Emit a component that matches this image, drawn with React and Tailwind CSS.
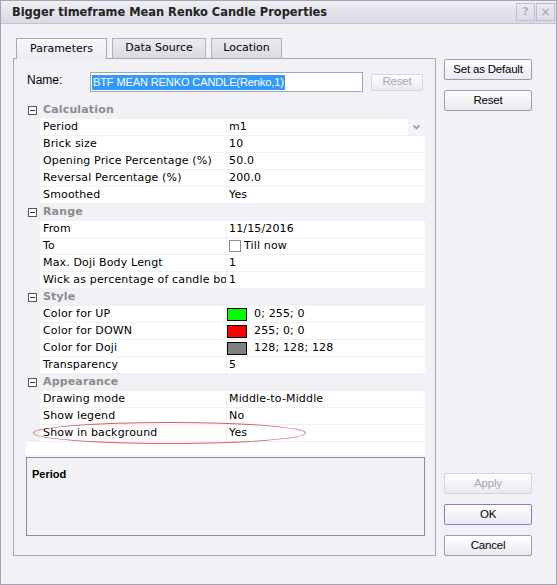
import React from "react";

const sections = [
  {
    title: "Calculation",
    rows: [
      { name: "Period", value: "m1", dropdown: true },
      { name: "Brick size", value: "10" },
      { name: "Opening Price Percentage (%)", value: "50.0" },
      { name: "Reversal Percentage (%)", value: "200.0" },
      { name: "Smoothed", value: "Yes" },
    ],
  },
  {
    title: "Range",
    rows: [
      { name: "From", value: "11/15/2016" },
      { name: "To", value: "Till now", checkbox: true },
      { name: "Max. Doji Body Lengt", value: "1" },
      { name: "Wick as percentage of candle body", value: "1" },
    ],
  },
  {
    title: "Style",
    rows: [
      { name: "Color for UP", value: "0; 255; 0", swatch: "bg-[#00ff00]" },
      { name: "Color for DOWN", value: "255; 0; 0", swatch: "bg-[#ff0000]" },
      { name: "Color for Doji", value: "128; 128; 128", swatch: "bg-[#808080]" },
      { name: "Transparency", value: "5" },
    ],
  },
  {
    title: "Appearance",
    rows: [
      { name: "Drawing mode", value: "Middle-to-Middle" },
      { name: "Show legend", value: "No" },
      { name: "Show in background", value: "Yes", circled: true },
    ],
  },
];

const ui = { fontFamily: '"Liberation Sans", Arial, sans-serif' };
const grid = { fontFamily: '"DejaVu Sans", Verdana, sans-serif' };
const title = { fontFamily: '"DejaVu Sans Condensed", "DejaVu Sans", sans-serif' };

function Button({ children, disabled, primary, className = "" }) {
  const border = disabled
    ? "border-[#d4d4dc] text-[#a8a8b0]"
    : primary
    ? "border-[#8080c8] text-black"
    : "border-[#9c9cac] text-black";
  return (
    <div
      className={`flex items-center justify-center rounded-[2px] border bg-gradient-to-b from-white to-[#e9e9f0] text-[11.5px] tracking-[-0.2px] ${border} ${className}`}
      style={ui}
    >
      {children}
    </div>
  );
}

function PropRow({ row }) {
  return (
    <div className="relative flex h-[17px] border-b border-[#f0f0f5] text-[11px] tracking-[0.15px] text-black">
      <div className="w-[14px] shrink-0" />
      <div className="flex w-[186px] shrink-0 items-center overflow-hidden whitespace-nowrap bg-white pl-[3px]">
        {row.name}
      </div>
      <div className="w-px shrink-0 bg-[#f0f0f5]" />
      <div className="flex flex-1 items-center bg-white pl-[2px]">
        {row.swatch ? (
          <span className={`-ml-[2px] mr-[7px] h-[13px] w-[20px] border border-black ${row.swatch}`} />
        ) : null}
        {row.checkbox ? (
          <span className="mr-[3px] h-[12px] w-[12px] border border-[#8c8c8c] bg-white" />
        ) : null}
        <span className="flex-1">{row.value}</span>
        {row.dropdown ? (
          <span className="flex h-full w-[17px] items-center justify-center bg-[#f4f4f8]">
            <svg width="7" height="5" viewBox="0 0 7 5">
              <path d="M0.5 0.5 L3.5 3.5 L6.5 0.5" fill="none" stroke="#8a8a9a" strokeWidth="1.4" />
            </svg>
          </span>
        ) : null}
      </div>
      {row.circled ? (
        <div className="pointer-events-none absolute left-[7px] top-[-3px] h-[22px] w-[273px] rounded-[50%] border border-[#e05a5a]" />
      ) : null}
    </div>
  );
}

export default function App() {
  return (
    <div
      className="flex h-[585px] w-[557px] flex-col border border-[#a4a4b4] bg-[#f1f1f6] text-black"
      style={grid}
    >
      <div className="flex h-[23px] shrink-0 items-center justify-between border-b border-[#c4c4d0] bg-gradient-to-b from-[#eeeef4] to-[#d9d9e5] pl-[11px] pr-[1px]">
        <span className="text-[12.7px] font-bold text-[#222]" style={title}>
          Bigger timeframe Mean Renko Candle Properties
        </span>
        <div className="flex gap-[1px]">
          <span className="flex h-[18px] w-[19px] items-center justify-center border border-[#c0c0cc] text-[11px] font-bold text-[#b0b0bc]">
            ?
          </span>
          <span className="flex h-[18px] w-[19px] items-center justify-center border border-[#c0c0cc] text-[12px] font-bold text-[#b0b0bc]">
            ×
          </span>
        </div>
      </div>

      <div className="flex flex-1 pl-[12px] pr-[24px] pt-[14px]">
        <div className="flex w-[423px] flex-col">
          <div className="flex h-[20px] items-end gap-[5px] pl-[3px] text-[11px]">
            <div className="relative z-10 -mb-px flex h-[21px] w-[91px] items-center justify-center border border-b-0 border-[#a8a8b8] bg-gradient-to-b from-[#f8f8fb] to-[#ececf1]">
              Parameters
            </div>
            <div className="flex h-[20px] w-[94px] items-center justify-center border border-b-0 border-[#b0b0c0] bg-gradient-to-b from-[#eaeaf0] to-[#dadae2]">
              Data Source
            </div>
            <div className="flex h-[20px] w-[71px] items-center justify-center border border-b-0 border-[#b0b0c0] bg-gradient-to-b from-[#eaeaf0] to-[#dadae2]">
              Location
            </div>
          </div>

          <div className="flex h-[498px] flex-col border border-[#a8a8b8] bg-[#f1f1f6] pl-[12px] pr-[10px] pt-[13px]">
            <div className="flex h-[20px] items-center" style={ui}>
              <span className="-mt-[4px] w-[64px] pl-[1px] text-[12px]">Name:</span>
              <div className="flex h-[20px] w-[273px] items-center border border-[#a4a4b4] bg-white pl-[1px]">
                <span className="bg-[#3399ff] px-[1px] text-[11px] leading-[15px] tracking-[-0.1px] text-white">
                  BTF MEAN RENKO CANDLE(Renko,1)
                </span>
              </div>
              <Button disabled className="ml-[8px] h-[17px] w-[52px]">
                Reset
              </Button>
            </div>

            <div className="mt-[10px] flex h-[353px] flex-col bg-white">
              <div className="flex flex-col bg-[#f0f0f5]">
                {sections.map((section) => (
                  <div key={section.title}>
                    <div className="flex h-[17px] items-center">
                      <span className="ml-[2px] flex h-[9px] w-[9px] items-center justify-center border border-[#555] bg-white">
                        <span className="h-px w-[5px] bg-[#333]" />
                      </span>
                      <span className="ml-[6px] text-[11px] font-bold tracking-[0.15px] text-[#8c8c8c]">
                        {section.title}
                      </span>
                    </div>
                    {section.rows.map((row) => (
                      <PropRow key={row.name} row={row} />
                    ))}
                  </div>
                ))}
              </div>
            </div>

            <div className="mt-[2px] h-[79px] border border-[#8c8c98] px-[5px] pt-[3px]">
              <span className="text-[11px] font-bold" style={ui}>
                Period
              </span>
            </div>
          </div>
        </div>

        <div className="ml-[8px] flex flex-1 flex-col pb-[28px]">
          <div className="mt-[21px] flex flex-col gap-[10px]">
            <Button className="h-[21px] w-[88px]">Set as Default</Button>
            <Button className="h-[21px] w-[88px]">Reset</Button>
          </div>
          <div className="mt-auto flex flex-col gap-[10px]">
            <Button disabled className="h-[21px] w-[88px]">
              Apply
            </Button>
            <Button primary className="h-[21px] w-[88px]">
              OK
            </Button>
            <Button className="h-[21px] w-[88px]">Cancel</Button>
          </div>
        </div>
      </div>
    </div>
  );
}
